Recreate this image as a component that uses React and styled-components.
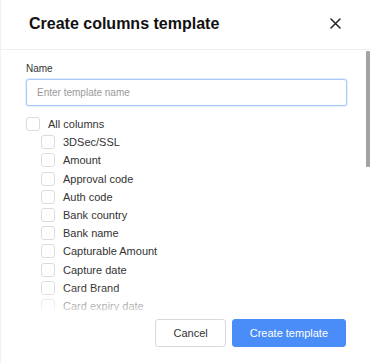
import React from "react";
import styled, { createGlobalStyle } from "styled-components";

const Global = createGlobalStyle`
  html, body { margin: 0; padding: 0; background: #fff; }
  body { font-family: "Liberation Sans", Arial, sans-serif; color: #333; }
  * { box-sizing: border-box; }
`;

const Dialog = styled.div`
  width: 370px;
  height: 363px;
  display: flex;
  flex-direction: column;
  background: #fff;
  border-left: 1px solid #f1f1f1;
  overflow: hidden;
`;

const Header = styled.div`
  height: 50px;
  flex: none;
  display: flex;
  align-items: center;
  justify-content: space-between;
  padding: 0 28px 0 28px;
  border-bottom: 1px solid #efefef;
`;

const Title = styled.h2`
  margin: 0;
  font-family: "Liberation Sans", Arial, sans-serif;
  font-weight: 700;
  font-size: 16px;
  color: #111;
  padding-bottom: 1px;
`;

const CloseButton = styled.button`
  border: 0;
  background: none;
  padding: 0;
  width: 14px;
  height: 14px;
  display: flex;
  align-items: center;
  justify-content: center;
  cursor: pointer;
  margin-bottom: 2px;
`;

const BodyWrap = styled.div`
  position: relative;
  flex: 1;
  min-height: 0;
  &::after {
    content: "";
    position: absolute;
    left: 0;
    right: 6px;
    bottom: 0;
    height: 24px;
    background: linear-gradient(rgba(255,255,255,0), rgba(255,255,255,0.8));
    pointer-events: none;
  }
`;

const Body = styled.div`
  height: 100%;
  overflow-y: auto;
  scrollbar-width: none;
  padding: 13px 23px 8px 25px;
  &::-webkit-scrollbar { display: none; }
`;

const ScrollThumb = styled.div`
  position: absolute;
  top: 1px;
  right: 0;
  width: 4px;
  height: 116px;
  background: #a3a3a3;
  border-radius: 1px;
`;

const Label = styled.label`
  display: block;
  font-size: 10px;
  color: #333;
  line-height: 12px;
  margin-bottom: 4px;
`;

const Input = styled.input`
  display: block;
  width: 100%;
  height: 27px;
  border: 1px solid #a9c9fb;
  border-radius: 3px;
  box-shadow: 0 0 0 1px #e3eeff;
  padding: 0 10px;
  font-family: "Liberation Sans", Arial, sans-serif;
  font-size: 10px;
  color: #333;
  outline: none;
  &::placeholder { color: #9a9a9a; }
`;

const List = styled.div`
  margin-top: 9px;
  display: flex;
  flex-direction: column;
`;

const Row = styled.label`
  display: flex;
  align-items: center;
  gap: 8px;
  height: 18.2px;
  padding-left: ${(p) => (p.$child ? "15px" : "0")};
  font-size: 11px;
  color: #333;
`;

const Box = styled.span`
  width: 14px;
  height: 14px;
  flex: none;
  border: 1px solid #dcdcdc;
  border-radius: 3px;
  background: #fff;
`;

const Footer = styled.div`
  flex: none;
  height: 52px;
  display: flex;
  justify-content: flex-end;
  align-items: flex-start;
  gap: 6px;
  padding: 8px 24px 0 0;
`;

const Button = styled.button`
  height: 28px;
  padding: 0 17px;
  border-radius: 3px;
  font-family: "Liberation Sans", Arial, sans-serif;
  font-size: 11px;
  cursor: pointer;
  border: 1px solid ${(p) => (p.$primary ? "#4a8df8" : "#d9d9d9")};
  background: ${(p) => (p.$primary ? "#4a8df8" : "#fff")};
  color: ${(p) => (p.$primary ? "#fff" : "#333")};
`;

const columns = [
  "3DSec/SSL",
  "Amount",
  "Approval code",
  "Auth code",
  "Bank country",
  "Bank name",
  "Capturable Amount",
  "Capture date",
  "Card Brand",
  "Card expiry date",
  "Card holder",
  "Card number",
  "Channel",
  "Created at",
  "Currency",
  "Customer email",
  "Customer ID",
  "Description",
  "Error code",
  "Error message",
  "IP address",
  "Merchant",
  "Order ID",
  "Payment method",
  "Refunded amount",
  "Status",
  "Transaction ID",
];

export default function App() {
  return (
    <>
      <Global />
      <Dialog>
        <Header>
          <Title>Create columns template</Title>
          <CloseButton aria-label="Close">
            <svg width="11" height="11" viewBox="0 0 11 11">
              <path d="M1 1L10 10M10 1L1 10" stroke="#222" strokeWidth="1.5" strokeLinecap="round" />
            </svg>
          </CloseButton>
        </Header>
        <BodyWrap>
          <Body>
            <Label>Name</Label>
            <Input placeholder="Enter template name" />
            <List>
              <Row>
                <Box />
                All columns
              </Row>
              {columns.map((c) => (
                <Row key={c} $child>
                  <Box />
                  {c}
                </Row>
              ))}
            </List>
          </Body>
          <ScrollThumb />
        </BodyWrap>
        <Footer>
          <Button>Cancel</Button>
          <Button $primary>Create template</Button>
        </Footer>
      </Dialog>
    </>
  );
}
